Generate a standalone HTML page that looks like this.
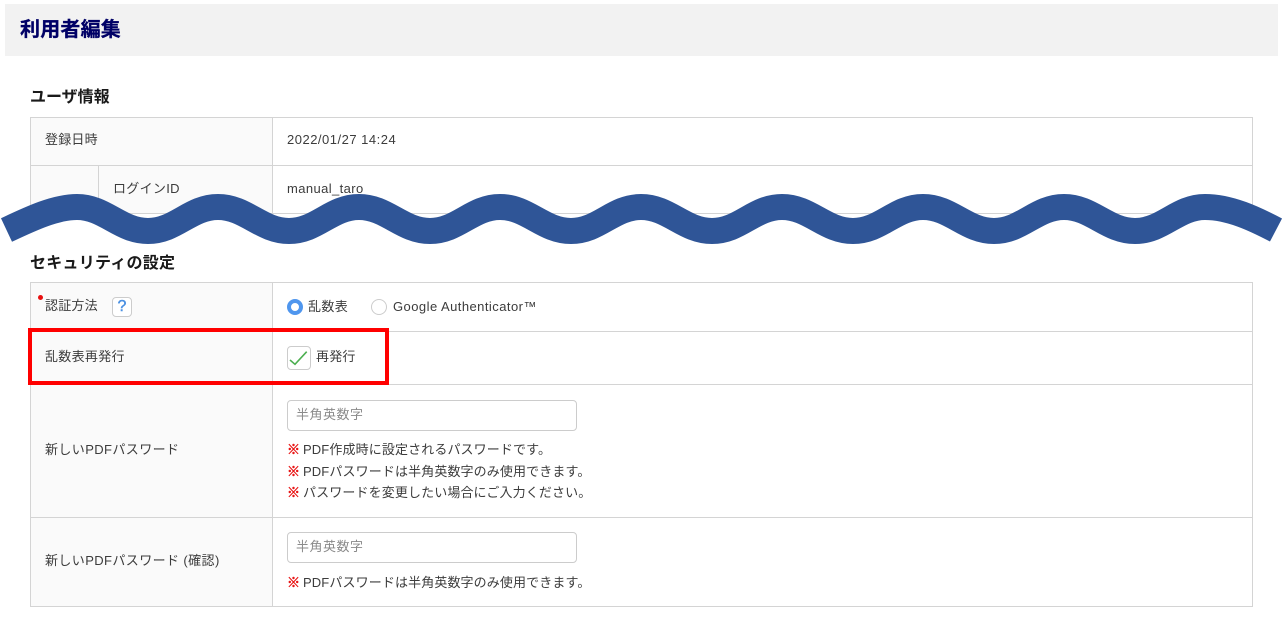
<!DOCTYPE html>
<html lang="ja"><head><meta charset="utf-8"><title>利用者編集</title>
<style>
html,body{margin:0;padding:0;background:#fff}
body{position:relative;width:1283px;height:620px;overflow:hidden;font-family:"Liberation Sans","Noto Sans CJK JP",sans-serif;color:#333}
.t{position:absolute;white-space:nowrap;font-size:13px;line-height:18px;letter-spacing:.4px;color:#3c3c3c}
.n{letter-spacing:.12px}
.l{position:absolute;background:#d4d4d4}
.bg{position:absolute;background:#fafafa}
.inp{position:absolute;box-sizing:border-box;left:287px;width:290px;height:31px;border:1px solid #ccc;border-radius:4px;background:#fff;padding-left:8px;font-size:13px;line-height:28px;letter-spacing:.5px;color:#8a8a8a}
.r{display:inline-block;width:16px;font-family:"Noto Sans CJK JP",sans-serif;font-weight:bold;color:#e81010;letter-spacing:0;-webkit-text-stroke:.5px #e81010}
h1{position:absolute;margin:0;left:20px;top:16px;font-size:20px;line-height:29px;font-weight:bold;letter-spacing:.2px;color:#000066;-webkit-text-stroke:.3px #000066}
h2{position:absolute;margin:0;left:30px;font-size:16px;line-height:20px;font-weight:bold;color:#1a1a1a;white-space:nowrap}
</style></head><body>
<div style="position:absolute;left:5px;top:4px;width:1273px;height:52px;background:#f2f2f2"></div>
<h1>利用者編集</h1>
<h2 style="top:88px">ユーザ情報</h2>

<div class="bg" style="left:30px;top:117px;width:242px;height:97px"></div>
<div class="l" style="left:30px;top:117px;width:1223px;height:1px"></div>
<div class="l" style="left:30px;top:165px;width:1223px;height:1px"></div>
<div class="l" style="left:30px;top:213px;width:1223px;height:1px"></div>
<div class="l" style="left:30px;top:117px;width:1px;height:97px"></div>
<div class="l" style="left:98px;top:165px;width:1px;height:49px"></div>
<div class="l" style="left:272px;top:117px;width:1px;height:97px"></div>
<div class="l" style="left:1252px;top:117px;width:1px;height:97px"></div>
<div class="t" style="left:45px;top:131px;letter-spacing:.2px">登録日時</div>
<div class="t" style="left:287px;top:131px;letter-spacing:.5px">2022/01/27 14:24</div>
<div class="t" style="left:113px;top:180px;letter-spacing:.3px">ログインID</div>
<div class="t" style="left:287px;top:180px">manual_taro</div>

<svg style="position:absolute;left:0;top:0" width="1283" height="260" viewBox="0 0 1283 260"><path d="M6.500 230C30 219 55 207 77 207C105 207 120 231 148 231C176 231 190 207 218 207C246 207 261 231 289 231C317 231 331 207 359 207C387 207 402 231 430 231C458 231 472 207 500 207C528 207 543 231 571 231C599 231 613 207 641 207C669 207 684 231 712 231C740 231 754 207 782 207C810 207 825 231 853 231C881 231 895 207 923 207C951 207 966 231 994 231C1022 231 1036 207 1064 207C1092 207 1107 231 1135 231C1163 231 1177 207 1205 207C1230 207 1255 219 1276 230" fill="none" stroke="#2f5597" stroke-width="26"/></svg>

<h2 style="top:254px;letter-spacing:.25px">セキュリティの設定</h2>

<div class="bg" style="left:30px;top:282px;width:242px;height:324px"></div>
<div class="l" style="left:30px;top:282px;width:1223px;height:1px"></div>
<div class="l" style="left:30px;top:331px;width:1223px;height:1px"></div>
<div class="l" style="left:30px;top:384px;width:1223px;height:1px"></div>
<div class="l" style="left:30px;top:517px;width:1223px;height:1px"></div>
<div class="l" style="left:30px;top:606px;width:1223px;height:1px"></div>
<div class="l" style="left:30px;top:282px;width:1px;height:325px"></div>
<div class="l" style="left:272px;top:282px;width:1px;height:325px"></div>
<div class="l" style="left:1252px;top:282px;width:1px;height:325px"></div>

<div style="position:absolute;left:38px;top:295px;width:5px;height:5px;border-radius:50%;background:#e81010"></div>
<div class="t" style="left:45px;top:297px;letter-spacing:.2px">認証方法</div>
<div style="position:absolute;box-sizing:border-box;left:112px;top:297px;width:20px;height:20px;border:1px solid #ccc;border-radius:4px;background:#fff;text-align:center;font-size:16px;line-height:18px;color:#4a90e2;-webkit-text-stroke:.4px #4a90e2">?</div>

<div style="position:absolute;box-sizing:border-box;left:287px;top:299px;width:16px;height:16px;border-radius:50%;border:4px solid #4f96ee;background:#fff"></div>
<div class="t" style="left:308px;top:298px">乱数表</div>
<div style="position:absolute;box-sizing:border-box;left:371px;top:299px;width:16px;height:16px;border-radius:50%;border:1px solid #ccc;background:#fff"></div>
<div class="t" style="left:393px;top:298px;letter-spacing:.45px">Google Authenticator™</div>

<div class="t" style="left:45px;top:348px;letter-spacing:.3px">乱数表再発行</div>
<div style="position:absolute;box-sizing:border-box;left:287px;top:346px;width:24px;height:24px;border:1px solid #ccc;border-radius:4px;background:#fff"></div>
<svg style="position:absolute;left:287px;top:346px" width="24" height="24" viewBox="0 0 24 24"><path d="M3 14L8 18.300L19.700 5.700" fill="none" stroke="#4caf50" stroke-width="1.600"/></svg>
<div class="t" style="left:316px;top:348px;letter-spacing:.2px">再発行</div>

<div class="t" style="left:45px;top:441px">新しいPDFパスワード</div>
<div class="inp" style="top:400px">半角英数字</div>
<div class="t n" style="left:287px;top:440px"><span class="r">※</span>PDF作成時に設定されるパスワードです。</div>
<div class="t n" style="left:287px;top:462px"><span class="r">※</span>PDFパスワードは半角英数字のみ使用できます。</div>
<div class="t n" style="left:287px;top:483px"><span class="r">※</span>パスワードを変更したい場合にご入力ください。</div>

<div class="t" style="left:45px;top:552px;letter-spacing:.4px">新しいPDFパスワード (確認)</div>
<div class="inp" style="top:532px">半角英数字</div>
<div class="t n" style="left:287px;top:573px"><span class="r">※</span>PDFパスワードは半角英数字のみ使用できます。</div>

<div style="position:absolute;box-sizing:border-box;left:28px;top:328px;width:361px;height:57px;border:4px solid #f00"></div>
</body></html>
